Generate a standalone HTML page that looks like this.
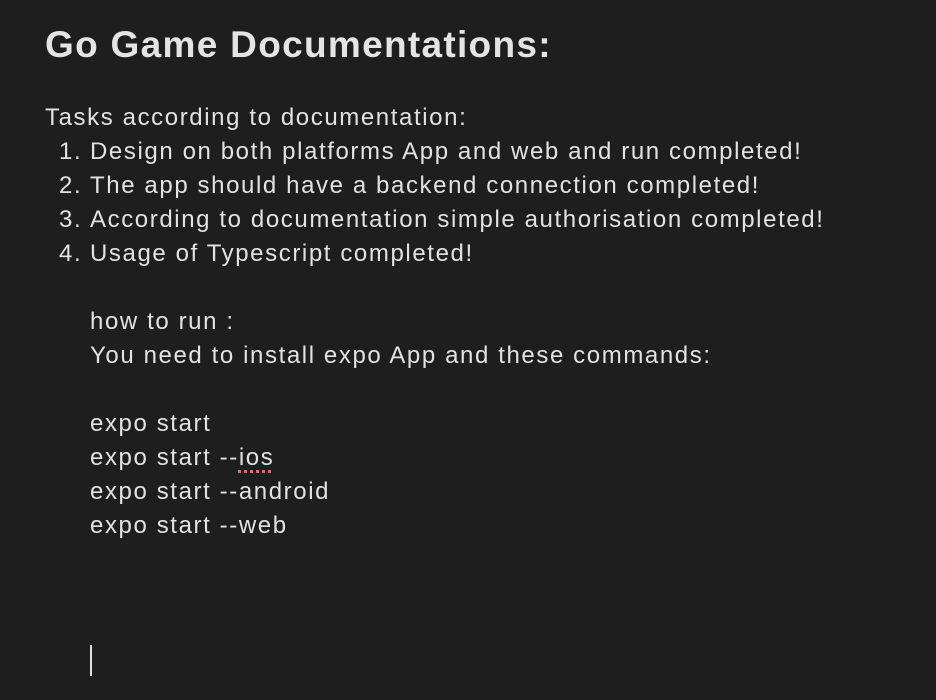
<!DOCTYPE html>
<html><head><style>
html,body{margin:0;padding:0;width:936px;height:700px;background:#1e1e1e;overflow:hidden}
body{font-family:"Liberation Sans",sans-serif;color:#e2e2e2;position:relative}
.t{position:absolute;left:45px;top:24px;font-size:37px;font-weight:bold;letter-spacing:1.3px;white-space:nowrap;color:#e4e4e4}
.l{position:absolute;font-size:24px;white-space:nowrap;line-height:34px;height:34px;letter-spacing:1.6px}
.sp{text-decoration:underline dotted #e06c6c 3px;text-underline-offset:5px}
.cur{position:absolute;left:90px;top:645px;width:2px;height:31px;background:#e0e0e0}
</style></head><body>
<div class="t">Go Game Documentations:</div>
<div class="l" style="left:45px;top:101px">Tasks according to documentation:</div>
<div class="l" style="left:59px;top:135px">1.</div><div class="l" style="left:90px;top:135px">Design on both platforms App and web and run completed!</div>
<div class="l" style="left:59px;top:169px">2.</div><div class="l" style="left:90px;top:169px">The app should have a backend connection completed!</div>
<div class="l" style="left:59px;top:203px">3.</div><div class="l" style="left:90px;top:203px">According to documentation simple authorisation completed!</div>
<div class="l" style="left:59px;top:237px">4.</div><div class="l" style="left:90px;top:237px">Usage of Typescript completed!</div>
<div class="l" style="left:90px;top:305px">how to run :</div>
<div class="l" style="left:90px;top:339px">You need to install expo App and these commands:</div>
<div class="l" style="left:90px;top:407px">expo start</div>
<div class="l" style="left:90px;top:441px">expo start --<span class="sp">ios</span></div>
<div class="l" style="left:90px;top:475px">expo start --android</div>
<div class="l" style="left:90px;top:509px">expo start --web</div>
<div class="cur"></div>
</body></html>
